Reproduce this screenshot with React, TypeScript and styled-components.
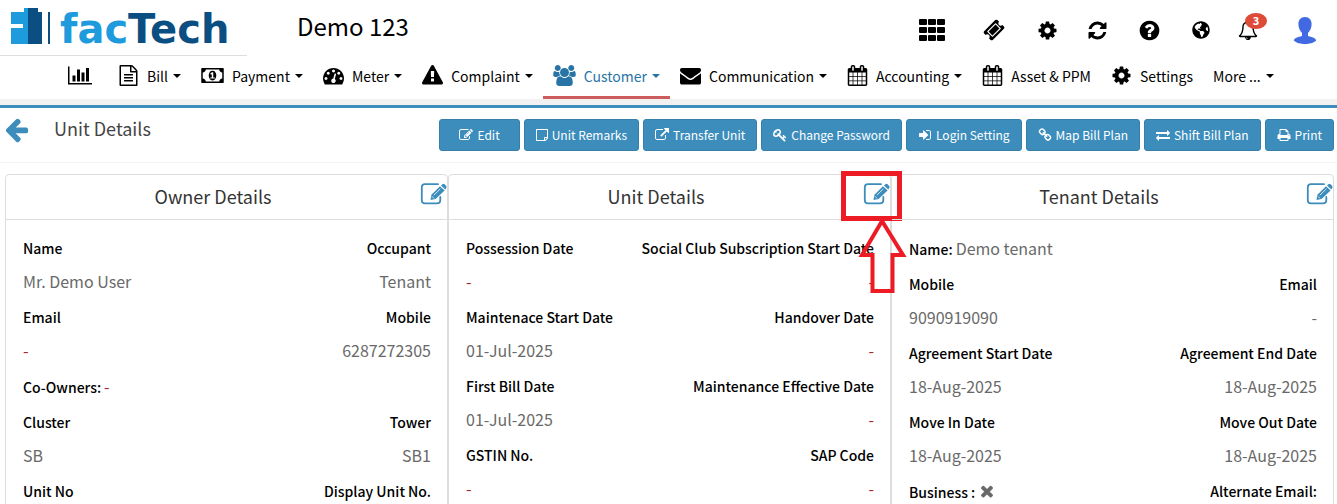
import React from 'react';
import styled, { createGlobalStyle } from 'styled-components';
import { FaGlobeAmericas } from 'react-icons/fa';

const blue = '#3c8dbc';

const GlobalStyle = createGlobalStyle`
  * { box-sizing: border-box; }
  html, body { margin: 0; background: #fff; }
  body {
    font-family: "Noto Sans CJK SC", "Noto Sans", sans-serif;
    font-size: 14px;
    line-height: 20px;
    color: #000;
    overflow: hidden;
  }
  button { font-family: inherit; cursor: pointer; }
  a { color: inherit; text-decoration: none; }
`;

type IconShape = { w: number; d: string };

const icons: Record<string, IconShape> = {
  chart: { w: 2048, d: 'M640 896v512h-256v-512h256zm384-512v1024h-256v-1024h256zm1024 1152v128h-2048v-1536h128v1408h1920zm-640-896v768h-256v-768h256zm384-384v1152h-256v-1152h256z' },
  file: { w: 1792, d: 'M1596 380q28 28 48 76t20 88v1152q0 40-28 68t-68 28h-1344q-40 0-68-28t-28-68v-1600q0-40 28-68t68-28h896q40 0 88 20t76 48zm-444-244v376h376q-10-29-22-41l-313-313q-12-12-41-22zm384 1528v-1024h-416q-40 0-68-28t-28-68v-416h-768v1536h1280zm-1024-864q0-14 9-23t23-9h704q14 0 23 9t9 23v64q0 14-9 23t-23 9h-704q-14 0-23-9t-9-23v-64zm736 224q14 0 23 9t9 23v64q0 14-9 23t-23 9h-704q-14 0-23-9t-9-23v-64q0-14 9-23t23-9h704zm0 256q14 0 23 9t9 23v64q0 14-9 23t-23 9h-704q-14 0-23-9t-9-23v-64q0-14 9-23t23-9h704z' },
  money: { w: 1920, d: 'M768 1152h384v-96h-128v-448h-114l-148 137 77 80q42-37 55-57h2v288h-128v96zm512-256q0 70-21 142t-59.5 134-101.5 101-138 39-138-39-101.5-101-59.5-134-21-142 21-142 59.5-134 101.5-101 138-39 138 39 101.5 101 59.5 134 21 142zm512 256v-512q-106 0-181-75t-75-181h-1152q0 106-75 181t-181 75v512q106 0 181 75t75 181h1152q0-106 75-181t181-75zm128-832v1152q0 26-19 45t-45 19h-1792q-26 0-45-19t-19-45v-1152q0-26 19-45t45-19h1792q26 0 45 19t19 45z' },
  meter: { w: 1792, d: 'M384 1152q0-53-37.5-90.5t-90.5-37.5-90.5 37.5-37.5 90.5 37.5 90.5 90.5 37.5 90.5-37.5 37.5-90.5zm192-448q0-53-37.5-90.5t-90.5-37.5-90.5 37.5-37.5 90.5 37.5 90.5 90.5 37.5 90.5-37.5 37.5-90.5zm428 481l101-382q6-26-7.5-48.5t-38.5-29.5-48 6.5-30 39.5l-101 382q-60 5-107 43.5t-63 98.5q-20 77 20 146t117 89 146-20 89-117q16-60-6-117t-72-91zm660-33q0-53-37.5-90.5t-90.5-37.5-90.5 37.5-37.5 90.5 37.5 90.5 90.5 37.5 90.5-37.5 37.5-90.5zm-640-640q0-53-37.5-90.5t-90.5-37.5-90.5 37.5-37.5 90.5 37.5 90.5 90.5 37.5 90.5-37.5 37.5-90.5zm448 192q0-53-37.5-90.5t-90.5-37.5-90.5 37.5-37.5 90.5 37.5 90.5 90.5 37.5 90.5-37.5 37.5-90.5zm320 448q0 261-141 483-19 29-54 29h-1402q-35 0-54-29-141-221-141-483 0-182 71-348t191-286 286-191 348-71 348 71 286 191 191 286 71 348z' },
  warning: { w: 1792, d: 'M1024 1375v-190q0-14-9.5-23.5t-22.5-9.5h-192q-13 0-22.5 9.5t-9.5 23.5v190q0 14 9.5 23.5t22.5 9.5h192q13 0 22.5-9.5t9.5-23.5zm-2-374l18-459q0-12-10-19-13-11-24-11h-220q-11 0-24 11-10 7-10 21l17 457q0 10 10 16.5t24 6.5h185q14 0 23.5-6.5t10.5-16.5zm-14-934l768 1408q35 63-2 126-17 29-46.5 46t-63.5 17h-1536q-34 0-63.5-17t-46.5-46q-37-63-2-126l768-1408q17-31 47-49t65-18 65 18 47 49z' },
  users: { w: 1920, d: 'M593 896q-162 5-265 128h-134q-82 0-138-40.5t-56-118.5q0-353 124-353 6 0 43.5 21t97.5 42.5 119 21.5q67 0 133-23-5 37-5 66 0 139 81 256zm1071 637q0 120-73 189.5t-194 69.5h-874q-121 0-194-69.5t-73-189.5q0-53 3.5-103.5t14-109 26.5-108.5 43-97.5 62-81 85.5-53.5 111.5-20q10 0 43 21.5t73 48 107 48 135 21.5 135-21.5 107-48 73-48 43-21.5q61 0 111.5 20t85.5 53.5 62 81 43 97.5 26.5 108.5 14 109 3.5 103.5zm-1024-1277q0 106-75 181t-181 75-181-75-75-181 75-181 181-75 181 75 75 181zm704 384q0 159-112.5 271.5t-271.5 112.5-271.5-112.5-112.5-271.5 112.5-271.5 271.5-112.5 271.5 112.5 112.5 271.5zm576 225q0 78-56 118.5t-138 40.5h-134q-103-123-265-128 81-117 81-256 0-29-5-66 66 23 133 23 59 0 119-21.5t97.5-42.5 43.5-21q124 0 124 353zm-128-609q0 106-75 181t-181 75-181-75-75-181 75-181 181-75 181 75 75 181z' },
  envelope: { w: 1792, d: 'M1792 710v794q0 66-47 113t-113 47h-1472q-66 0-113-47t-47-113v-794q44 49 101 87 362 246 497 345 57 42 92.5 65.5t94.5 48 110 24.5h2q51 0 110-24.5t94.5-48 92.5-65.5q170-123 498-345 57-39 100-87zm0-294q0 79-49 151t-122 123q-376 261-468 325-10 7-42.5 31t-54 38.5-52 32.5-57.5 27-50 9h-2q-23 0-50-9t-57.5-27-52-32.5-54-38.5-42.5-31q-91-64-262-182.5t-205-142.5q-62-42-117-115.5t-55-136.5q0-78 41.5-130t118.5-52h1472q65 0 112.5 47t47.5 113z' },
  calendar: { w: 1792, d: 'M192 1664h288v-288h-288v288zm352 0h320v-288h-320v288zm-352-352h288v-320h-288v320zm352 0h320v-320h-320v320zm-352-384h288v-288h-288v288zm736 736h320v-288h-320v288zm-384-736h320v-288h-320v288zm768 736h288v-288h-288v288zm-384-352h320v-320h-320v320zm-352-864v-288q0-13-9.5-22.5t-22.5-9.5h-64q-13 0-22.5 9.5t-9.5 22.5v288q0 13 9.5 22.5t22.5 9.5h64q13 0 22.5-9.5t9.5-22.5zm736 864h288v-320h-288v320zm-384-384h320v-288h-320v288zm384 0h288v-288h-288v288zm32-480v-288q0-13-9.5-22.5t-22.5-9.5h-64q-13 0-22.5 9.5t-9.5 22.5v288q0 13 9.5 22.5t22.5 9.5h64q13 0 22.5-9.5t9.5-22.5zm384-64v1280q0 52-38 90t-90 38h-1408q-52 0-90-38t-38-90v-1280q0-52 38-90t90-38h128v-96q0-66 47-113t113-47h64q66 0 113 47t47 113v96h384v-96q0-66 47-113t113-47h64q66 0 113 47t47 113v96h128q52 0 90 38t38 90z' },
  cog: { w: 1792, d: 'M1152 896q0-106-75-181t-181-75-181 75-75 181 75 181 181 75 181-75 75-181zm512-109v222q0 12-8 23t-20 13l-185 28q-19 54-39 91 35 50 107 138 10 12 10 25t-9 23q-27 37-99 108t-94 71q-12 0-26-9l-138-108q-44 23-91 38-16 136-29 186-7 28-36 28h-222q-14 0-24.5-8.5t-11.5-21.5l-28-184q-49-16-90-37l-141 107q-10 9-25 9-14 0-25-11-126-114-165-168-7-10-7-23 0-12 8-23 15-21 51-66.5t54-70.5q-27-50-41-99l-183-27q-13-2-21-12.5t-8-23.5v-222q0-12 8-23t19-13l186-28q14-46 39-92-40-57-107-138-10-12-10-24 0-10 9-23 26-36 98.5-107.5t94.5-71.5q13 0 26 10l138 107q44-23 91-38 16-136 29-186 7-28 36-28h222q14 0 24.5 8.5t11.5 21.5l28 184q49 16 90 37l142-107q9-9 24-9 13 0 25 10 129 119 165 170 7 8 7 22 0 12-8 23-15 21-51 66.5t-54 70.5q26 50 41 98l183 28q13 2 21 12.5t8 23.5z' },
  ticket: { w: 1792, d: 'M1024 452l316 316-572 572-316-316zm-211 979l618-618q19-19 19-45t-19-45l-362-362q-18-18-45-18t-45 18l-618 618q-19 19-19 45t19 45l362 362q18 18 45 18t45-18zm889-637l-907 908q-37 37-90.5 37t-90.5-37l-126-126q56-56 56-136t-56-136-136-56-136 56l-125-126q-37-37-37-90.5t37-90.5l907-906q37-37 90.5-37t90.5 37l125 125q-56 56-56 136t56 136 136 56 136-56l126 125q37 37 37 90.5t-37 90.5z' },
  refresh: { w: 1792, d: 'M1639 1056q0 5-1 7-64 268-268 434.5t-478 166.5q-146 0-282.5-55t-243.5-157l-129 129q-19 19-45 19t-45-19-19-45v-448q0-26 19-45t45-19h448q26 0 45 19t19 45-19 45l-137 137q71 66 161 102t187 36q134 0 250-65t186-179q11-17 53-117 8-23 30-23h192q13 0 22.5 9.5t9.5 22.5zm25-800v448q0 26-19 45t-45 19h-448q-26 0-45-19t-19-45 19-45l138-138q-148-137-349-137-134 0-250 65t-186 179q-11 17-53 117-8 23-30 23h-199q-13 0-22.5-9.5t-9.5-22.5v-7q65-268 270-434.5t480-166.5q146 0 284 55.5t245 156.5l130-129q19-19 45-19t45 19 19 45z' },
  question: { w: 1792, d: 'M1024 1376v-192q0-14-9-23t-23-9h-192q-14 0-23 9t-9 23v192q0 14 9 23t23 9h192q14 0 23-9t9-23zm256-672q0-88-55.5-163t-138.5-116-170-41q-243 0-371 213-15 24 8 42l132 100q7 6 19 6 16 0 25-12 53-68 86-92 34-24 86-24 48 0 85.5 26t37.5 59q0 38-20 61t-68 45q-63 28-115.5 86.5t-52.5 125.5v36q0 14 9 23t23 9h192q14 0 23-9t9-23q0-19 21.5-49.5t54.5-49.5q32-18 49-28.5t46-35 44.5-48 28-60.5 12.5-81zm384 192q0 209-103 385.5t-279.5 279.5-385.5 103-385.5-103-279.5-279.5-103-385.5 103-385.5 279.5-279.5 385.5-103 385.5 103 279.5 279.5 103 385.5z' },
  bell: { w: 1792, d: 'M912 1696q0-16-16-16-59 0-101.5-42.5t-42.5-101.5q0-16-16-16t-16 16q0 73 51.5 124.5t124.5 51.5q16 0 16-16zm-666-288h1300q-266-300-266-832 0-51-24-105t-69-103-121.5-80.5-169.5-31.5-169.5 31.5-121.5 80.5-69 103-24 105q0 532-266 832zm1482 0q0 52-38 90t-90 38h-448q0 106-75 181t-181 75-181-75-75-181h-448q-52 0-90-38t-38-90q50-42 91-88t85-119.5 74.5-158.5 50-206 19.5-260q0-152 117-282.5t307-158.5q-8-19-8-39 0-40 28-68t68-28 68 28 28 68q0 20-8 39 190 28 307 158.5t117 282.5q0 139 19.5 260t50 206 74.5 158.5 85 119.5 91 88z' },
  arrowLeft: { w: 1792, d: 'M1664 896v128q0 53-32.5 90.5t-84.5 37.5h-704l293 294q38 36 38 90t-38 90l-75 76q-37 37-90 37-52 0-91-37l-651-652q-37-37-37-90 0-52 37-91l651-650q38-38 91-38 52 0 90 38l75 74q38 38 38 91t-38 91l-293 293h704q52 0 84.5 37.5t32.5 90.5z' },
  edit: { w: 1792, d: 'M888 1184l116-116-152-152-116 116v56h96v96h56zm440-720q-16-16-33 1l-350 350q-17 17-1 33t33-1l350-350q17-17 1-33zm80 594v190q0 119-84.5 203.5t-203.5 84.5h-832q-119 0-203.5-84.5t-84.5-203.5v-832q0-119 84.5-203.5t203.5-84.5h832q63 0 117 25 15 7 18 23 3 17-9 29l-49 49q-14 14-32 8-23-6-45-6h-832q-66 0-113 47t-47 113v832q0 66 47 113t113 47h832q66 0 113-47t47-113v-126q0-13 9-22l64-64q15-15 35-7t20 29zm-96-738l288 288-672 672h-288v-288zm444 132l-92 92-288-288 92-92q28-28 68-28t68 28l152 152q28 28 28 68t-28 68z' },
  note: { w: 1536, d: 'M1400 1280h-248v248q29-10 41-22l185-185q12-12 22-41zm-280-128h288v-896h-1280v1280h896v-288q0-40 28-68t68-28zm416-928v1024q0 40-20 88t-48 76l-184 184q-28 28-76 48t-88 20h-1024q-40 0-68-28t-28-68v-1344q0-40 28-68t68-28h1344q40 0 68 28t28 68z' },
  transfer: { w: 1792, d: 'M1408 928v320q0 119-84.5 203.5t-203.5 84.5h-832q-119 0-203.5-84.5t-84.5-203.5v-832q0-119 84.5-203.5t203.5-84.5h704q14 0 23 9t9 23v64q0 14-9 23t-23 9h-704q-66 0-113 47t-47 113v832q0 66 47 113t113 47h832q66 0 113-47t47-113v-320q0-14 9-23t23-9h64q14 0 23 9t9 23zm384-864v512q0 26-19 45t-45 19-45-19l-176-176-652 652q-10 10-23 10t-23-10l-114-114q-10-10-10-23t10-23l652-652-176-176q-19-19-19-45t19-45 45-19h512q26 0 45 19t19 45z' },
  key: { w: 1792, d: 'M832 512q0-80-56-136t-136-56-136 56-56 136q0 42 19 83-41-19-83-19-80 0-136 56t-56 136 56 136 136 56 136-56 56-136q0-42-19-83 41 19 83 19 80 0 136-56t56-136zm851 704q0 17-49 66t-66 49q-9 0-28.5-16t-36.5-33-38.5-40-24.5-26l-96 96 220 220q28 28 28 68 0 42-39 81t-81 39q-40 0-68-28l-671-671q-176 131-365 131-163 0-265.5-102.5t-102.5-265.5q0-160 95-313t248-248 313-95q163 0 265.5 102.5t102.5 265.5q0 189-131 365l355 355 96-96q-3-3-26-24.5t-40-38.5-33-36.5-16-28.5q0-17 49-66t66-49q13 0 23 10 6 6 46 44.5t82 79.5 86.5 86 73 78 28.5 41z' },
  signIn: { w: 1792, d: 'M1312 896q0 26-19 45l-544 544q-19 19-45 19t-45-19-19-45v-288h-448q-26 0-45-19t-19-45v-384q0-26 19-45t45-19h448v-288q0-26 19-45t45-19 45 19l544 544q19 19 19 45zm352-352v704q0 119-84.5 203.5t-203.5 84.5h-320q-13 0-22.5-9.5t-9.5-22.5q0-4-1-20t-.5-26.5 3-23.5 10-19.5 20.5-6.5h320q66 0 113-47t47-113v-704q0-66-47-113t-113-47h-312l-11.5-1-11.5-3-8-5.5-7-9-2-13.5q0-4-1-20t-.5-26.5 3-23.5 10-19.5 20.5-6.5h320q119 0 203.5 84.5t84.5 203.5z' },
  chain: { w: 1792, d: 'M1520 1216q0-40-28-68l-208-208q-28-28-68-28-42 0-72 32 3 3 19 18.5t21.5 21.5 15 19 13 25.5 3.5 27.5q0 40-28 68t-68 28q-15 0-27.5-3.5t-25.5-13-19-15-21.5-21.5-18.5-19q-33 31-33 73 0 40 28 68l206 207q27 27 68 27 40 0 68-26l147-146q28-28 28-67zm-703-705q0-40-28-68l-206-207q-28-28-68-28-39 0-68 27l-147 146q-28 28-28 67 0 40 28 68l208 208q27 27 68 27 42 0 72-31-3-3-19-18.5t-21.5-21.5-15-19-13-25.5-3.5-27.5q0-40 28-68t68-28q15 0 27.5 3.5t25.5 13 19 15 21.5 21.5 18.5 19q33-31 33-73zm895 705q0 120-85 203l-147 146q-83 83-203 83-121 0-204-85l-206-207q-83-83-83-203 0-123 88-209l-88-88q-86 88-208 88-120 0-204-84l-208-208q-84-84-84-204t85-203l147-146q83-83 203-83 121 0 204 85l206 207q83 83 83 203 0 123-88 209l88 88q86-88 208-88 120 0 204 84l208 208q84 84 84 204z' },
  exchange: { w: 1792, d: 'M1792 1184v192q0 13-9.5 22.5t-22.5 9.5h-1376v192q0 13-9.5 22.5t-22.5 9.5q-12 0-24-10l-319-320q-9-9-9-22 0-14 9-23l320-320q9-9 23-9 13 0 22.5 9.5t9.5 22.5v192h1376q13 0 22.5 9.5t9.5 22.5zm0-544q0 14-9 23l-320 320q-9 9-23 9-13 0-22.5-9.5t-9.5-22.5v-192h-1376q-13 0-22.5-9.5t-9.5-22.5v-192q0-13 9.5-22.5t22.5-9.5h1376v-192q0-14 9-23t23-9q12 0 24 10l319 319q9 9 9 23z' },
  print: { w: 1792, d: 'M448 1536h896v-256h-896v256zm0-640h896v-384h-160q-40 0-68-28t-28-68v-160h-640v640zm1152 64q0-26-19-45t-45-19-45 19-19 45 19 45 45 19 45-19 19-45zm128 0v416q0 13-9.5 22.5t-22.5 9.5h-224v160q0 40-28 68t-68 28h-960q-40 0-68-28t-28-68v-160h-224q-13 0-22.5-9.5t-9.5-22.5v-416q0-79 56.5-135.5t135.5-56.5h64v-544q0-40 28-68t68-28h672q40 0 88 20t76 48l152 152q28 28 48 76t20 88v256h64q79 0 135.5 56.5t56.5 135.5z' },
  times: { w: 1792, d: 'M1490 1322q0 40-28 68l-136 136q-28 28-68 28t-68-28l-294-294-294 294q-28 28-68 28t-68-28l-136-136q-28-28-28-68t28-68l294-294-294-294q-28-28-28-68t28-68l136-136q28-28 68-28t68 28l294 294 294-294q28-28 68-28t68 28l136 136q28 28 28 68t-28 68l-294 294 294 294q28 28 28 68z' },
};

const Glyph = styled.svg`
  display: block;
  flex: none;
  fill: currentColor;
`;

function Icon({ name, size }: { name: string; size: number }) {
  const { w, d } = icons[name];
  return (
    <Glyph viewBox={`0 0 ${w} 1792`} height={size} width={Math.round((size * w) / 1792)} aria-hidden="true">
      <path d={d} />
    </Glyph>
  );
}

/* ---------- top bar ---------- */

const TopBar = styled.header`
  display: flex;
  align-items: stretch;
  height: 56px;
`;

const Brand = styled.a`
  display: flex;
  width: 247px;
  border-bottom: 1px solid #ddd;
`;

const SiteName = styled.h1`
  margin: 0;
  padding: 11px 0 0 50px;
  flex: 1;
  font-size: 24px;
  line-height: 30px;
  font-weight: 400;
`;

const Tools = styled.div`
  display: flex;
  align-items: center;
  padding: 4px 20px 0 0;
`;

const ToolButton = styled.button<{ $width: number; $end?: boolean }>`
  position: relative;
  display: flex;
  justify-content: ${(p) => (p.$end ? 'flex-end' : 'center')};
  align-items: center;
  width: ${(p) => p.$width}px;
  height: 40px;
  padding: 0;
  border: 0;
  background: none;
  color: #000;
`;

const Badge = styled.span`
  position: absolute;
  top: 3px;
  right: 1px;
  width: 22px;
  height: 16px;
  border-radius: 50%;
  background: #dd4b39;
  color: #fff;
  font-size: 11px;
  line-height: 15px;
  font-weight: 700;
`;

/* ---------- main menu ---------- */

const Menu = styled.nav`
  display: flex;
  height: 52px;
  padding-left: 58px;
  border-bottom: 3px solid ${blue};
  background: linear-gradient(#fff 43px, #f1f1f1 43px);
`;

const MenuItem = styled.a<{ $active?: boolean; $iconOnly?: boolean }>`
  display: flex;
  align-items: center;
  height: 43px;
  padding: 0 ${(p) => (p.$iconOnly ? 16 : 10)}px 4px 10px;
  gap: 8px;
  white-space: nowrap;
  color: ${(p) => (p.$active ? '#2874a6' : '#000')};
  box-shadow: ${(p) => (p.$active ? 'inset 0 -3px #cd5c5c' : 'none')};
`;

const MenuText = styled.span`
  display: flex;
  align-items: center;
  gap: 5px;
`;

const Caret = styled.span`
  border: 4px solid transparent;
  border-top-color: currentColor;
  border-bottom: 0;
`;

/* ---------- page heading ---------- */

const Heading = styled.div`
  display: flex;
  align-items: flex-start;
  height: 55px;
  padding: 8px 3px 0;
  border-bottom: 1px solid #f4f4f4;
`;

const BackLink = styled.a`
  color: ${blue};
`;

const PageTitle = styled.h2`
  flex: 1;
  margin: 0;
  padding-left: 24px;
  font-size: 18px;
  line-height: 24px;
  font-weight: 400;
  color: #444;
`;

const Actions = styled.div`
  display: flex;
  gap: 4px;
  padding-top: 3px;
`;

const ActionButton = styled.button<{ $wide?: boolean }>`
  display: flex;
  align-items: center;
  gap: 4px;
  height: 32px;
  padding: 0 ${(p) => (p.$wide ? 19 : 11)}px;
  border: 1px solid #367fa9;
  border-radius: 3px;
  background: ${blue};
  color: #fff;
  font-size: 12px;
  font-weight: 400;
  line-height: 20px;
  white-space: nowrap;
`;

/* ---------- panels ---------- */

const Panels = styled.main`
  display: grid;
  grid-template-columns: repeat(3, 1fr);
  padding: 11px 3px 0 5px;
`;

const Panel = styled.section`
  border: 1px solid #ddd;
  border-radius: 4px 4px 0 0;
  padding-bottom: 12px;
`;

const PanelHead = styled.div`
  position: relative;
  display: flex;
  align-items: center;
  height: 45px;
  padding-bottom: 2px;
  border-bottom: 1px solid #ddd;
`;

const PanelTitle = styled.h3`
  flex: 1;
  margin: 0;
  font-size: 18px;
  line-height: 24px;
  font-weight: 400;
  text-align: center;
  color: #333;
`;

const EditButton = styled.button`
  display: block;
  padding: 0;
  border: 0;
  background: none;
  color: ${blue};
`;

const Callout = styled.svg`
  position: absolute;
  top: -6px;
  right: -18px;
  pointer-events: none;
`;

const Fields = styled.dl`
  margin: 0;
  padding: 11px 16px 0 17px;
`;

const Pair = styled.div`
  display: flex;
  justify-content: space-between;
`;

const Field = styled.div<{ $end?: boolean }>`
  text-align: ${(p) => (p.$end ? 'right' : 'left')};
`;

const Label = styled.dt`
  font-size: 14px;
  font-weight: 500;
  line-height: 34px;
  white-space: nowrap;
`;

const Value = styled.dd<{ $none?: boolean }>`
  margin: 0;
  padding-bottom: 2px;
  font-size: 16px;
  line-height: 33px;
  color: ${(p) => (p.$none ? '#a52a2a' : '#696969')};
`;

const InlineField = styled.div`
  display: flex;
  align-items: center;
  gap: 3px;
  height: 36px;
`;

const EditGlyph = () => (
  <svg width="27" height="24" viewBox="0 0 27 24" aria-hidden="true">
    <path d="M18 2.2H5Q1.8 2.2 1.8 5.4V18.3Q1.8 21.4 5 21.4H17Q20.3 21.4 20.3 18.3V15" fill="none" stroke="currentColor" strokeWidth="1.8" strokeLinecap="round" />
    <path d="M10.5 18L11.4 12.8L20 4.2L24.6 8.6L15.6 17Z" fill="currentColor" />
    <path d="M21 3.4L22.4 2.2Q23.6 1.3 24.6 2.3L26.2 4Q27 5 26.2 6L25.3 7.4Z" fill="currentColor" />
    <path d="M13.8 13.2L20.4 6.8M12 14.4L14 16.4" stroke="#fff" strokeWidth=".8" fill="none" />
  </svg>
);

const PersonGlyph = () => (
  <svg width="24" height="28" viewBox="0 0 24 28" aria-hidden="true">
    <path fill="#4169e1" d="M12 1C7.7 1 5.4 4 5.4 8C5.4 12 7 15 9 17V20C5 21 1 22 .8 24.5C3 27 8 28 12 28S21 27 23.2 24.5C23 22 19 21 15 20V17C17 15 18.6 12 18.6 8C18.6 4 16.3 1 12 1Z" />
  </svg>
);

const GridGlyph = () => (
  <svg width="28" height="22" viewBox="0 0 28 22" aria-hidden="true">
    {[0, 8, 16].map((y) =>
      [0, 9, 18].map((x) => <rect key={`${x}-${y}`} x={x + 1} y={y} width="8" height="6" rx="1" />),
    )}
  </svg>
);

const Logo = () => (
  <svg width="247" height="55" viewBox="0 0 247 55" role="img" aria-label="facTech">
    <path fill="#1e9bdc" d="M11 12H24V8H28V44H11V28H23V24H11Z" />
    <path fill="#0b4f82" d="M28 8H38V12H42V44H28Z" />
    <path fill="#0b4f82" d="M48 12H50V44H48Z" />
    <text x="60" y="43" fontFamily="'DejaVu Sans', sans-serif" fontWeight="700" fontSize="40" fill="#1e9bdc">
      fac<tspan fill="#0b4f82">Tech</tspan>
    </text>
  </svg>
);

type MenuEntry = { text: string; icon?: string; caret?: boolean; active?: boolean };

const menu: MenuEntry[] = [
  { text: '', icon: 'chart' },
  { text: 'Bill', icon: 'file', caret: true },
  { text: 'Payment', icon: 'money', caret: true },
  { text: 'Meter', icon: 'meter', caret: true },
  { text: 'Complaint', icon: 'warning', caret: true },
  { text: 'Customer', icon: 'users', caret: true, active: true },
  { text: 'Communication', icon: 'envelope', caret: true },
  { text: 'Accounting', icon: 'calendar', caret: true },
  { text: 'Asset & PPM', icon: 'calendar' },
  { text: 'Settings', icon: 'cog' },
  { text: 'More ...', caret: true },
];

const actions = [
  { text: 'Edit', icon: 'edit', wide: true },
  { text: 'Unit Remarks', icon: 'note' },
  { text: 'Transfer Unit', icon: 'transfer' },
  { text: 'Change Password', icon: 'key' },
  { text: 'Login Setting', icon: 'signIn' },
  { text: 'Map Bill Plan', icon: 'chain' },
  { text: 'Shift Bill Plan', icon: 'exchange' },
  { text: 'Print', icon: 'print' },
];

type Entry = { label: string; value?: string; grey?: boolean };

const Item = ({ entry, end }: { entry: Entry; end?: boolean }) => (
  <Field $end={end}>
    <Label>{entry.label}</Label>
    {entry.value && <Value $none={entry.value === '-' && !entry.grey}>{entry.value}</Value>}
  </Field>
);

const Row = ({ left, right }: { left: Entry; right: Entry }) => (
  <Pair>
    <Item entry={left} />
    <Item entry={right} end />
  </Pair>
);

const PanelHeader = ({ title, children }: { title: string; children?: React.ReactNode }) => (
  <PanelHead>
    <PanelTitle>{title}</PanelTitle>
    <EditButton aria-label={`Edit ${title}`}>
      <EditGlyph />
    </EditButton>
    {children}
  </PanelHead>
);

export default function App() {
  return (
    <>
      <GlobalStyle />
      <TopBar>
        <Brand href="#">
          <Logo />
        </Brand>
        <SiteName>Demo 123</SiteName>
        <Tools>
          <ToolButton $width={64} aria-label="Apps"><GridGlyph /></ToolButton>
          <ToolButton $width={60} aria-label="Tickets"><Icon name="ticket" size={22} /></ToolButton>
          <ToolButton $width={46} aria-label="Settings"><Icon name="cog" size={21} /></ToolButton>
          <ToolButton $width={54} aria-label="Refresh"><Icon name="refresh" size={21} /></ToolButton>
          <ToolButton $width={50} aria-label="Help"><Icon name="question" size={23} /></ToolButton>
          <ToolButton $width={54} aria-label="Language"><FaGlobeAmericas size={18} /></ToolButton>
          <ToolButton $width={40} aria-label="Notifications">
            <Icon name="bell" size={20} />
            <Badge>3</Badge>
          </ToolButton>
          <ToolButton $width={49} $end aria-label="Account"><PersonGlyph /></ToolButton>
        </Tools>
      </TopBar>
      <Menu>
        {menu.map((m, i) => (
          <MenuItem key={i} href="#" $active={m.active} $iconOnly={!m.text} aria-label={m.text || 'Dashboard'}>
            {m.icon && <Icon name={m.icon} size={21} />}
            {m.text && (
              <MenuText>
                {m.text}
                {m.caret && <Caret />}
              </MenuText>
            )}
          </MenuItem>
        ))}
      </Menu>
      <Heading>
        <BackLink href="#" aria-label="Back"><Icon name="arrowLeft" size={27} /></BackLink>
        <PageTitle>Unit Details</PageTitle>
        <Actions>
          {actions.map((a) => (
            <ActionButton key={a.text} $wide={a.wide}>
              <Icon name={a.icon} size={14} />
              {a.text}
            </ActionButton>
          ))}
        </Actions>
      </Heading>
      <Panels>
        <Panel>
          <PanelHeader title="Owner Details" />
          <Fields>
            <Row left={{ label: 'Name', value: 'Mr. Demo User' }} right={{ label: 'Occupant', value: 'Tenant' }} />
            <Row left={{ label: 'Email', value: '-' }} right={{ label: 'Mobile', value: '6287272305' }} />
            <InlineField><Label>Co-Owners:</Label><Value $none>-</Value></InlineField>
            <Row left={{ label: 'Cluster', value: 'SB' }} right={{ label: 'Tower', value: 'SB1' }} />
            <Row left={{ label: 'Unit No' }} right={{ label: 'Display Unit No.' }} />
          </Fields>
        </Panel>
        <Panel>
          <PanelHeader title="Unit Details">
            <Callout width="70" height="130" viewBox="0 0 70 130" fill="none" stroke="#ed1c24" strokeWidth="5" aria-hidden="true">
              <path d="M5.500 4.500H61.500V49.500H5.500Z" />
              <path d="M44 52L65 86H54.500V122H34.500V86H24Z" strokeWidth="4" />
            </Callout>
          </PanelHeader>
          <Fields>
            <Row left={{ label: 'Possession Date', value: '-' }} right={{ label: 'Social Club Subscription Start Date', value: '-' }} />
            <Row left={{ label: 'Maintenace Start Date', value: '01-Jul-2025' }} right={{ label: 'Handover Date', value: '-' }} />
            <Row left={{ label: 'First Bill Date', value: '01-Jul-2025' }} right={{ label: 'Maintenance Effective Date', value: '-' }} />
            <Row left={{ label: 'GSTIN No.', value: '-' }} right={{ label: 'SAP Code', value: '-' }} />
          </Fields>
        </Panel>
        <Panel>
          <PanelHeader title="Tenant Details" />
          <Fields>
            <InlineField><Label>Name:</Label><Value>Demo tenant</Value></InlineField>
            <Row left={{ label: 'Mobile', value: '9090919090' }} right={{ label: 'Email', value: '-', grey: true }} />
            <Row left={{ label: 'Agreement Start Date', value: '18-Aug-2025' }} right={{ label: 'Agreement End Date', value: '18-Aug-2025' }} />
            <Row left={{ label: 'Move In Date', value: '18-Aug-2025' }} right={{ label: 'Move Out Date', value: '18-Aug-2025' }} />
            <Pair>
              <InlineField><Label>Business :</Label><Value aria-label="No"><Icon name="times" size={18} /></Value></InlineField>
              <Label as="div">Alternate Email:</Label>
            </Pair>
          </Fields>
        </Panel>
      </Panels>
    </>
  );
}
